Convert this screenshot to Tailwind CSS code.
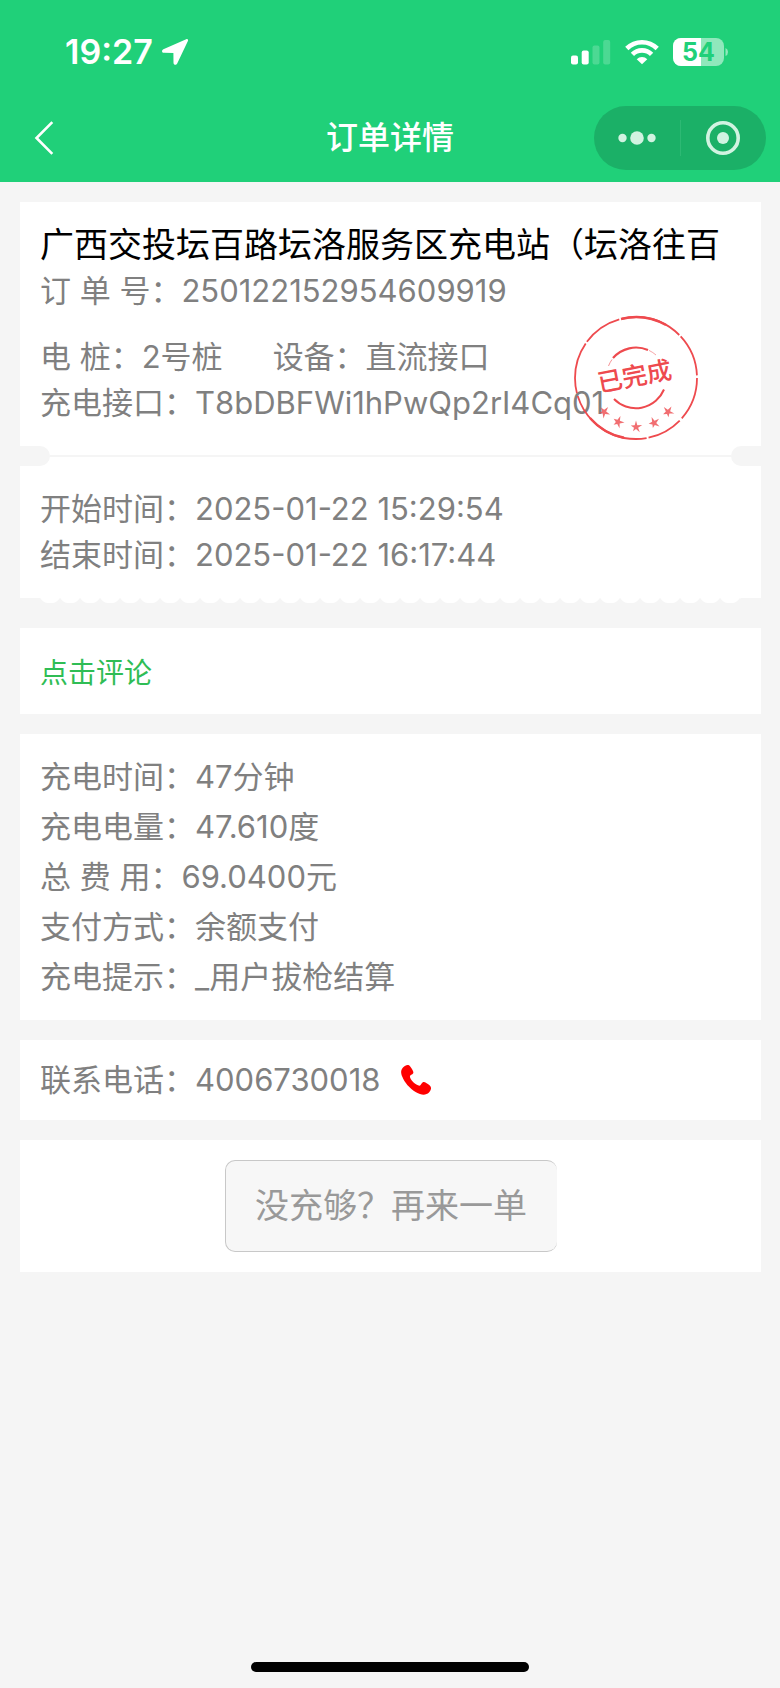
<!DOCTYPE html>
<html lang="zh-CN">
<head>
<meta charset="utf-8">
<meta name="viewport" content="width=device-width, initial-scale=1">
<title>订单详情</title>
<script src="https://cdn.jsdelivr.net/npm/@tailwindcss/browser@4"></script>
</head>
<body class="flex min-h-screen flex-col bg-[#f5f5f5] font-['Inter','Noto_Sans_CJK_SC',sans-serif] text-[31px] leading-[46px] text-[#808080]">

<header class="bg-[#20d079] pb-3 text-white">
  <!-- status bar -->
  <div class="flex h-[106px] items-center justify-between pr-[52px] pb-[3px] pl-[65px]">
    <div class="flex items-center gap-2">
      <span class="text-[34px] font-semibold">19:27</span>
      <svg class="h-7 w-7" viewBox="0 0 28 28" fill="currentColor" aria-hidden="true"><path d="M25.200 1.200 L2.400 11.200 C0.400 12.200 0.700 14.700 3 14.800 L12.400 14.900 L12.500 24.700 C12.600 27.200 15.200 27.500 16.200 25.500 L26.900 3 C27.500 1.600 26.500 .6 25.200 1.200Z"/></svg>
    </div>
    <div class="flex items-center">
      <svg class="h-[26px] w-10" viewBox="0 0 40 26" fill="currentColor" aria-hidden="true">
        <rect x="0" y="16.500" width="7" height="9" rx="2"/>
        <rect x="10.700" y="11.500" width="7" height="14" rx="2"/>
        <rect x="21.500" y="6.500" width="7" height="19" rx="2" opacity=".2"/>
        <rect x="32.200" y="1" width="7" height="24.500" rx="2" opacity=".2"/>
      </svg>
      <svg class="ml-[14px] h-[26px] w-[34px]" viewBox="0 0 34 26" aria-hidden="true">
        <g fill="none" stroke="currentColor" stroke-width="4.600">
          <path d="M1.800 9.500 A21.500 21.500 0 0 1 32.200 9.500"/>
          <path d="M7.400 15.400 A13.500 13.500 0 0 1 26.600 15.400"/>
        </g>
        <path d="M17 25.300 L11.700 20.200 A7.500 7.500 0 0 1 22.300 20.200Z" fill="currentColor"/>
      </svg>
      <svg class="ml-[14px] h-7 w-[55px]" viewBox="0 0 55 28" role="img" aria-label="54%">
        <defs><clipPath id="cell"><rect width="51" height="28" rx="8"/></clipPath></defs>
        <g clip-path="url(#cell)"><rect width="51" height="28" fill="#fff" opacity=".5"/><rect width="28" height="28" fill="#fff"/></g>
        <path d="M52.500 10 Q55 11 55 14 Q55 17 52.500 18Z" fill="#fff" opacity=".5"/>
        <text x="25.500" y="23" text-anchor="middle" font-family="Inter" font-weight="700" font-size="25" fill="#20d079">54</text>
      </svg>
    </div>
  </div>
  <!-- navigation bar -->
  <div class="grid h-16 grid-cols-[1fr_auto_1fr] items-center">
    <button type="button" aria-label="返回" class="flex h-16 items-center justify-self-start pr-6 pl-[34px]">
      <svg class="h-9 w-5" viewBox="0 0 20 36" fill="none" stroke="currentColor" stroke-width="2.600" aria-hidden="true"><path d="M18.300 2.200 L2.500 18 L18.300 33.800"/></svg>
    </button>
    <h1 class="text-[32px] font-medium">订单详情</h1>
    <div class="mr-[14px] flex h-16 w-[172px] items-center justify-self-end rounded-full bg-[#1bb067] text-[#d1f3e1]">
      <button type="button" aria-label="更多" class="flex h-full flex-1 items-center justify-center">
        <svg class="h-4 w-[38px]" viewBox="0 0 38 16" fill="currentColor" aria-hidden="true"><circle cx="4.500" cy="8" r="4.200"/><circle cx="19" cy="8" r="6.800"/><circle cx="33.500" cy="8" r="4.200"/></svg>
      </button>
      <span class="h-9 w-px bg-[#2db974]"></span>
      <button type="button" aria-label="关闭" class="flex h-full flex-1 items-center justify-center">
        <svg class="h-[34px] w-[34px]" viewBox="0 0 34 34" aria-hidden="true"><circle cx="17" cy="17" r="15.200" fill="none" stroke="currentColor" stroke-width="3.600"/><circle cx="17" cy="17" r="6" fill="currentColor"/></svg>
      </button>
    </div>
  </div>
</header>

<main class="flex flex-col gap-5 pt-5 pr-[19px] pl-5">
  <section>
    <div class="relative bg-white p-5">
      <h2 class="overflow-hidden text-[34px] whitespace-nowrap text-black">广西交投坛百路坛洛服务区充电站（坛洛往百</h2>
      <p>订 单 号：250122152954609919</p>
      <p class="mt-5 flex gap-[50px]"><span>电 桩：2号桩</span><span>设备：直流接口</span></p>
      <p>充电接口：T8bDBFWi1hPwQp2rI4Cq01</p>
      <!-- completed stamp -->
      <svg class="absolute right-[62px] bottom-[5px] h-[126px] w-[126px]" viewBox="-63 -63 126 126" role="img" aria-label="已完成">
        <g fill="none" stroke="#ee4a4e">
          <circle r="61" stroke-width="1.800" stroke-dasharray="44 3 36 2 58 1 29 3 52 2 40 3 62 2 43 3"/>
          <path d="M-15 -59 A61 61 0 0 1 30 -53 M-46 40 A61 61 0 0 0 -12 59.800" stroke-width="2.400"/>
          <path d="M-27.500 -12 A30.500 30.500 0 0 1 -24 -18.500" stroke-width="1" opacity=".6"/>
          <path d="M-23 -20 A30.500 30.500 0 0 1 12 -28" stroke-width="2.200"/>
          <path d="M13 -27.600 A30.500 30.500 0 0 1 20 -23" stroke-width="1" opacity=".5"/>
          <path d="M-22 21 A30.500 30.500 0 0 0 28 11.500" stroke-width="2"/>
        </g>
        <text transform="rotate(-11)" x="-1" y="7" text-anchor="middle" font-family="Noto Sans CJK SC" font-weight="500" font-size="25" fill="#ee4a4e">已完成</text>
        <defs><path id="star" d="M0 -6.500 L1.300 -1.800 L6.200 -2 L2.100 .8 L3.800 5.300 L0 2.100 L-3 4.300 L-2 .8 L-5.200 -1.400 L-1.300 -1.800Z"/></defs>
        <g fill="#ee4a4e" opacity=".8">
          <use href="#star" transform="translate(-32 34) rotate(40)"/>
          <use href="#star" transform="translate(-18 44) rotate(22)"/>
          <use href="#star" transform="translate(0 49)"/>
          <use href="#star" transform="translate(18 45) rotate(-22)"/>
          <use href="#star" transform="translate(32 34) rotate(-40)"/>
        </g>
      </svg>
    </div>
    <!-- ticket perforation -->
    <div class="flex h-5 items-center bg-white">
      <span class="h-5 w-[30px] rounded-r-[10px] bg-[#f5f5f5]"></span>
      <span class="h-[2px] flex-1 bg-[#f5f5f5]"></span>
      <span class="h-5 w-[30px] rounded-l-[10px] bg-[#f5f5f5]"></span>
    </div>
    <div class="bg-white p-5">
      <p>开始时间：2025-01-22 15:29:54</p>
      <p>结束时间：2025-01-22 16:17:44</p>
    </div>
    <!-- scalloped edge -->
    <div class="mx-5 mb-[5px] h-[5px] bg-[radial-gradient(circle_at_10px_-6px,#fff_11px,transparent_12px)] bg-[length:20px_5px] bg-repeat-x"></div>
  </section>

  <section class="bg-white px-5 pt-[22px] pb-[18px] text-[28px]">
    <a href="#comment" class="text-[#2fbd55]">点击评论</a>
  </section>

  <section class="bg-white px-5 py-[18px] leading-[50px]">
    <p>充电时间：47分钟</p>
    <p>充电电量：47.610度</p>
    <p>总 费 用：69.0400元</p>
    <p>支付方式：余额支付</p>
    <p>充电提示：_用户拔枪结算</p>
  </section>

  <section class="flex h-20 items-center gap-5 bg-white px-5">
    <p>联系电话：4006730018</p>
    <a href="tel:4006730018" aria-label="拨打电话">
      <svg class="h-8 w-8" viewBox="0 0 32 32" fill="#f00" aria-hidden="true"><path d="M3 3.500 C5.500 .8 8.500 .2 10.200 2.400 C12.200 5 14 8 13.200 9.300 C12.400 10.700 9.900 11 9.900 12.500 C10 15.500 15.800 21.500 19.500 21.700 C21 21.700 21.200 19 22.800 18.200 C24.500 17.400 27.500 19.600 29.800 21.500 C31.800 23.300 31.400 26 29 28.500 C26 31.400 21.500 31.400 16 28.300 C9.500 24.500 4.500 18.500 2.200 12.600 C.7 8.500 .7 6 3 3.500Z"/></svg>
    </a>
  </section>

  <section class="flex justify-center bg-white p-5">
    <button type="button" class="h-[92px] w-[332px] rounded-[10px] border border-r-0 border-[#c8c8c8] bg-[#f7f7f7] text-[34px] whitespace-nowrap text-[#999]">没充够？再来一单</button>
  </section>
</main>

<div class="mx-auto mt-auto mb-4 h-[10px] w-[278px] rounded-full bg-black"></div>
</body>
</html>
